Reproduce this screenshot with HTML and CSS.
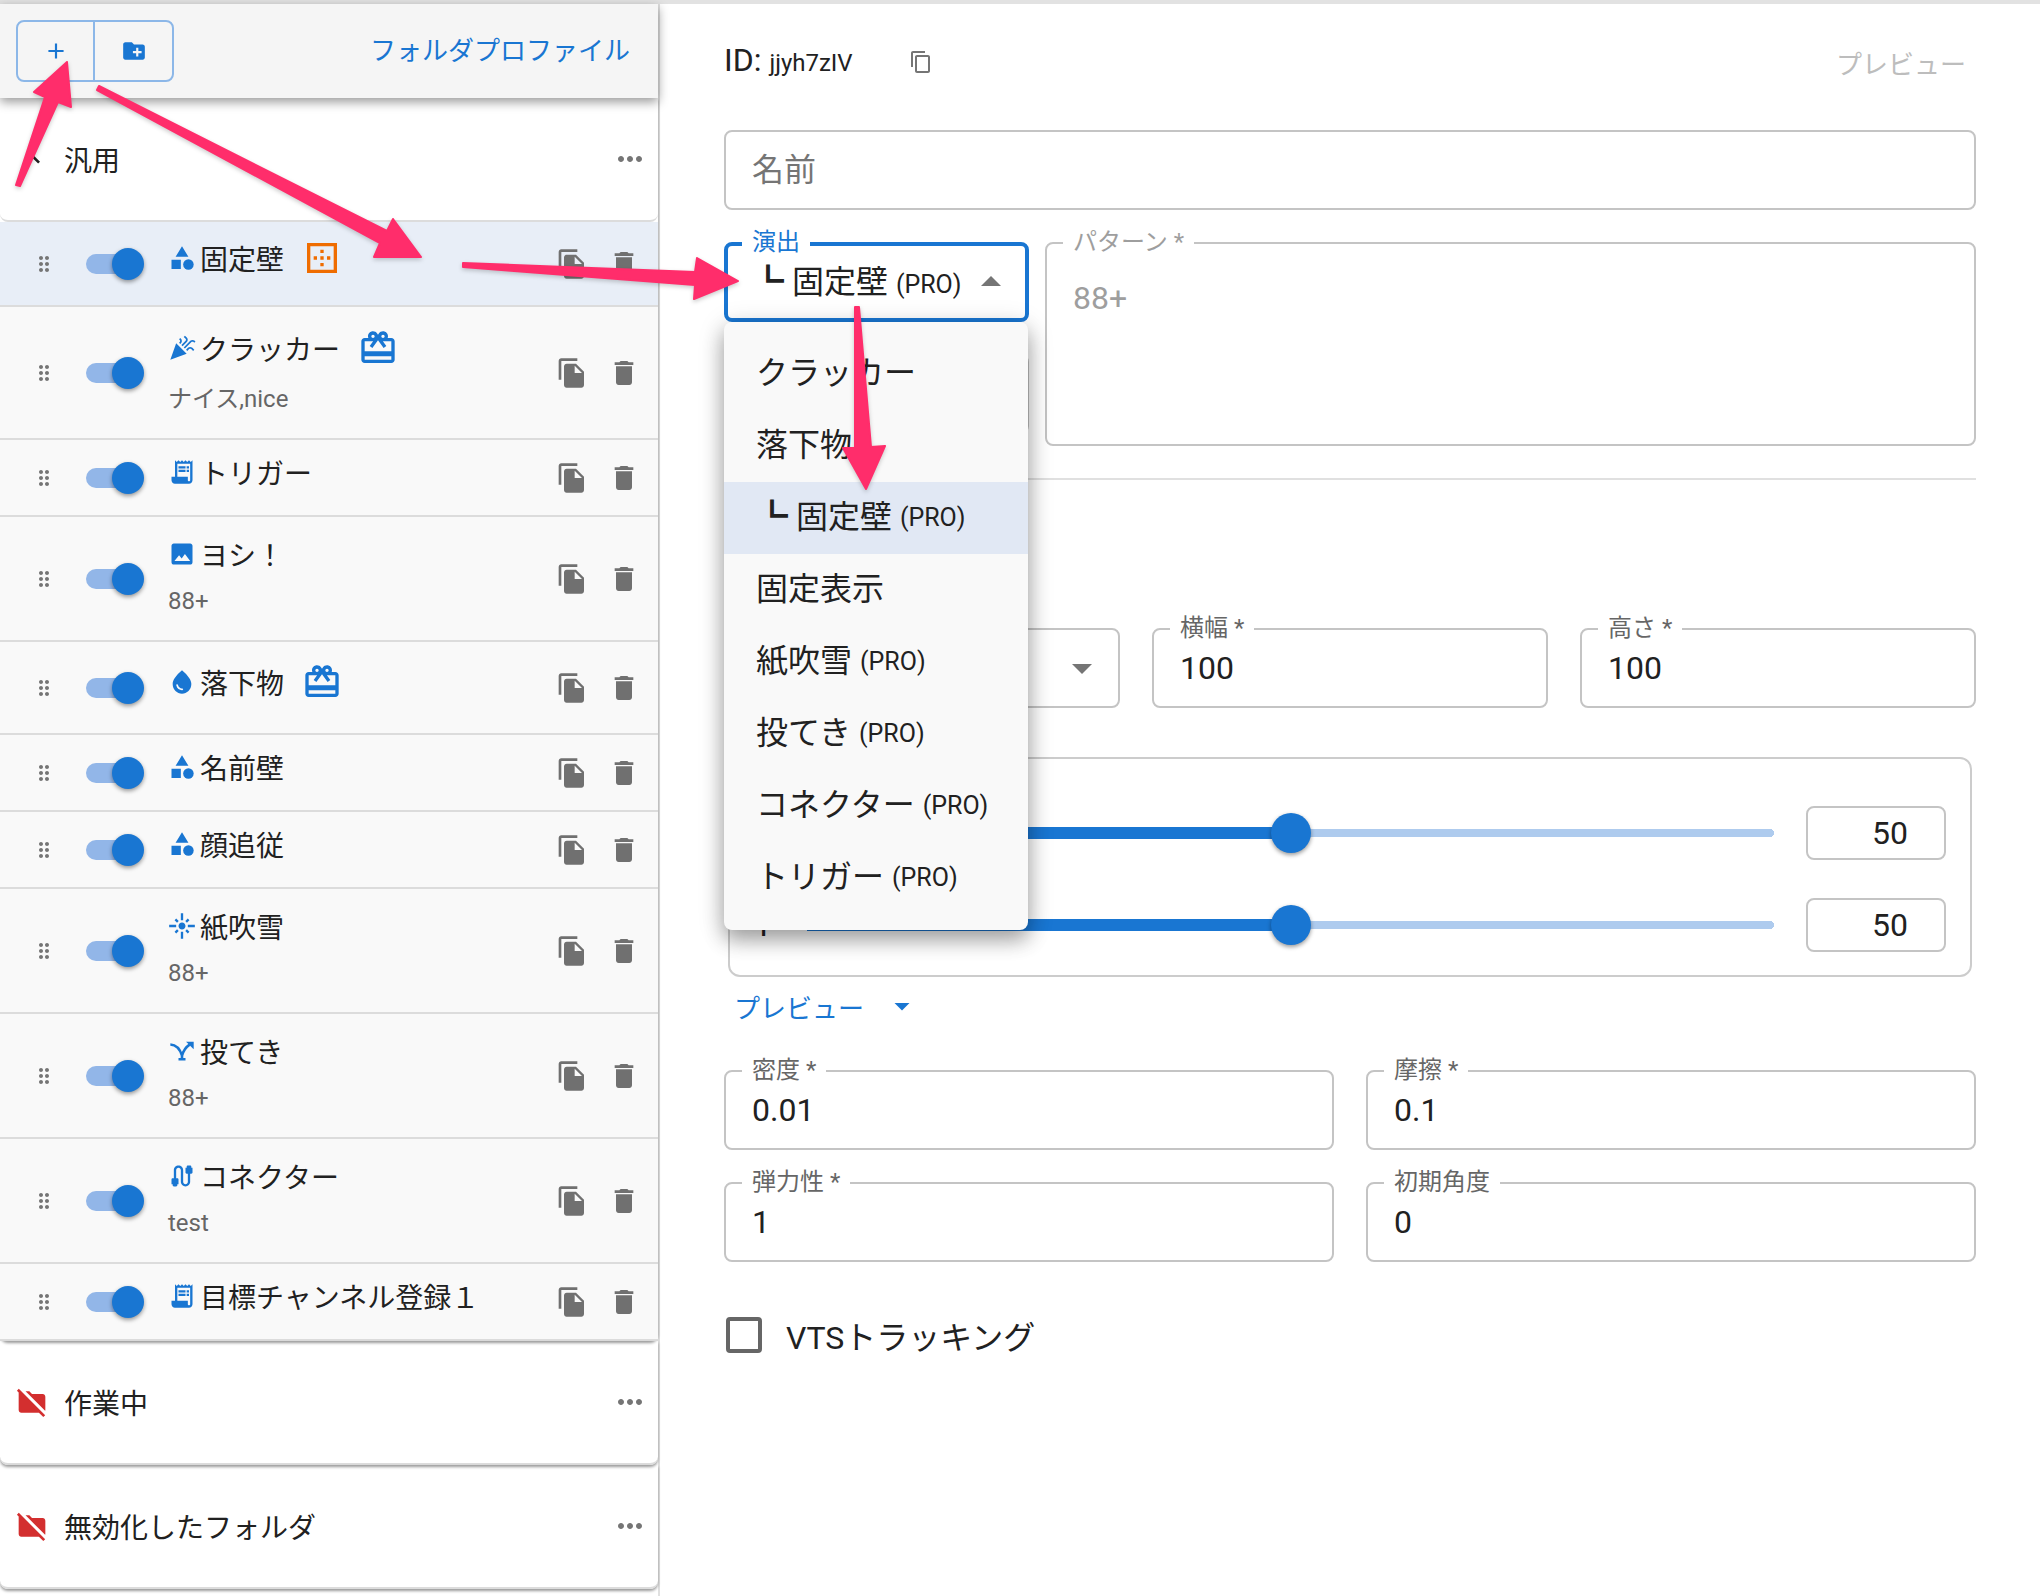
FILE: index.html
```html
<!DOCTYPE html>
<html lang="ja">
<head>
    <meta charset="UTF-8">
    <meta name="viewport" content="width=device-width, initial-scale=1.0">
    <title>フォルダプロファイル</title>
    <link rel="stylesheet" href="styles.css">
</head>
<body>
    <!-- Icon sprite -->
    <svg class="sprite" aria-hidden="true">
        <symbol id="i-add" viewBox="0 0 24 24"><path d="M19 13h-6v6h-2v-6H5v-2h6V5h2v6h6v2z"/></symbol>
        <symbol id="i-new-folder" viewBox="0 0 24 24"><path d="M20 6h-8l-2-2H4c-1.11 0-1.99.89-1.99 2L2 18c0 1.11.89 2 2 2h16c1.11 0 2-.89 2-2V8c0-1.11-.89-2-2-2zm-1 8h-3v3h-2v-3h-3v-2h3V9h2v3h3v2z"/></symbol>
        <symbol id="i-up" viewBox="0 0 24 24"><path d="m12 8-6 6 1.41 1.41L12 10.83l4.59 4.58L18 14z"/></symbol>
        <symbol id="i-more" viewBox="0 0 24 24"><path d="M6 10c-1.1 0-2 .9-2 2s.9 2 2 2 2-.9 2-2-.9-2-2-2zm12 0c-1.1 0-2 .9-2 2s.9 2 2 2 2-.9 2-2-.9-2-2-2zm-6 0c-1.1 0-2 .9-2 2s.9 2 2 2 2-.9 2-2-.9-2-2-2z"/></symbol>
        <symbol id="i-drag" viewBox="0 0 24 24"><path d="M11 18c0 1.1-.9 2-2 2s-2-.9-2-2 .9-2 2-2 2 .9 2 2zm-2-8c-1.1 0-2 .9-2 2s.9 2 2 2 2-.9 2-2-.9-2-2-2zm0-6c-1.1 0-2 .9-2 2s.9 2 2 2 2-.9 2-2-.9-2-2-2zm6 4c1.1 0 2-.9 2-2s-.9-2-2-2-2 .9-2 2 .9 2 2 2zm0 2c-1.1 0-2 .9-2 2s.9 2 2 2 2-.9 2-2-.9-2-2-2zm0 6c-1.1 0-2 .9-2 2s.9 2 2 2 2-.9 2-2-.9-2-2-2z"/></symbol>
        <symbol id="i-file-copy" viewBox="0 0 24 24"><path d="M16 1H4c-1.1 0-2 .9-2 2v14h2V3h12V1zm-1 4 6 6v10c0 1.1-.9 2-2 2H7.99C6.89 23 6 22.1 6 21l.01-14c0-1.1.89-2 1.99-2h7zm-1 7h5.5L14 6.5V12z"/></symbol>
        <symbol id="i-delete" viewBox="0 0 24 24"><path d="M6 19c0 1.1.9 2 2 2h8c1.1 0 2-.9 2-2V7H6v12zM19 4h-3.5l-1-1h-5l-1 1H5v2h14V4z"/></symbol>
        <symbol id="i-copy" viewBox="0 0 24 24"><path d="M16 1H4c-1.1 0-2 .9-2 2v14h2V3h12V1zm3 4H8c-1.1 0-2 .9-2 2v14c0 1.1.9 2 2 2h11c1.1 0 2-.9 2-2V7c0-1.1-.9-2-2-2zm0 16H8V7h11v14z"/></symbol>
        <symbol id="i-category" viewBox="0 0 24 24"><path d="m12 2-5.5 9h11zM3 13.5h8v8H3z"/><circle cx="17.5" cy="17.5" r="4.5"/></symbol>
        <symbol id="i-celebration" viewBox="0 0 24 24"><path d="m2 22 14-5-9-9zM14.53 12.53l5.59-5.59c.49-.49 1.28-.49 1.77 0l.59.59 1.06-1.06-.59-.59c-1.07-1.07-2.82-1.07-3.89 0l-5.59 5.59 1.06 1.06zM10.06 6.88l-.59.59 1.06 1.06.59-.59c1.07-1.07 1.07-2.82 0-3.89l-.59-.59-1.06 1.07.59.59c.48.48.48 1.28 0 1.76zM17.06 11.88l-1.59 1.59 1.06 1.06 1.59-1.59c.49-.49 1.28-.49 1.77 0l1.61 1.61 1.06-1.06-1.61-1.61c-1.08-1.07-2.82-1.07-3.89 0zM15.06 5.88l-3.59 3.59 1.06 1.06 3.59-3.59c1.07-1.07 1.07-2.82 0-3.89l-1.59-1.59-1.06 1.06 1.59 1.59c.48.49.48 1.29 0 1.77z"/></symbol>
        <symbol id="i-receipt" viewBox="0 0 24 24"><path d="M19.5 3.5 18 2l-1.5 1.5L15 2l-1.5 1.5L12 2l-1.5 1.5L9 2 7.5 3.5 6 2v14H3v3c0 1.66 1.34 3 3 3h12c1.66 0 3-1.34 3-3V2l-1.5 1.5zM19 19c0 .55-.45 1-1 1s-1-.45-1-1v-3H8V5h11v14zM9 7h6v2H9zM16 7h2v2h-2zM9 10h6v2H9zM16 10h2v2h-2z"/></symbol>
        <symbol id="i-image" viewBox="0 0 24 24"><path d="M21 19V5c0-1.1-.9-2-2-2H5c-1.1 0-2 .9-2 2v14c0 1.1.9 2 2 2h14c1.1 0 2-.9 2-2zM9.500 13l2.200 2.800L14.500 12l4.500 6H5.500l4-5z"/></symbol>
        <symbol id="i-drop" viewBox="0 0 24 24"><path d="M12 2c-5.33 4.55-8 8.48-8 11.8 0 4.98 3.8 8.2 8 8.2s8-3.22 8-8.2c0-3.32-2.67-7.25-8-11.8zM7.83 14c.37 0 .67.26.74.62.41 2.22 2.28 2.98 3.64 2.87.43-.02.79.32.79.75 0 .4-.32.73-.72.75-2.13.13-4.62-1.09-5.19-4.12-.08-.45.28-.87.74-.87z"/></symbol>
        <symbol id="i-flare" viewBox="0 0 24 24"><path d="M7 11H1v2h6v-2zm2.17-3.24L7.05 5.64 5.64 7.05l2.12 2.12 1.41-1.41zM13 1h-2v6h2V1zm5.36 6.05l-1.41-1.41-2.12 2.12 1.41 1.41 2.12-2.12zM17 11v2h6v-2h-6zm-5-2c-1.66 0-3 1.34-3 3s1.34 3 3 3 3-1.34 3-3-1.34-3-3-3zm2.83 7.24l2.12 2.12 1.41-1.41-2.12-2.12-1.41 1.41zm-9.19.71l1.41 1.41 2.12-2.12-1.41-1.41-2.12 2.12zM11 23h2v-6h-2v6z"/></symbol>
        <symbol id="i-throw" viewBox="0 0 24 24"><path d="M2 6.500c5 .3 8.300 4 10 9.500 1.200-4.500 3.500-7.500 6.500-9.500M12 15v4M9 19h6" fill="none" stroke="currentColor" stroke-width="2.200"/><path d="M15.500 4H22v6.500z"/></symbol>
        <symbol id="i-cable" viewBox="0 0 24 24"><path d="M20 5V4c0-.55-.45-1-1-1h-2c-.55 0-1 .45-1 1v1h-1v4c0 .55.45 1 1 1h1v7c0 1.100-.9 2-2 2s-2-.9-2-2V7c0-2.210-1.790-4-4-4S5 4.790 5 7v7H4c-.55 0-1 .45-1 1v4h1v1c0 .55.45 1 1 1h2c.55 0 1-.45 1-1v-1h1v-4c0-.55-.45-1-1-1H7V7c0-1.100.9-2 2-2s2 .9 2 2v10c0 2.210 1.790 4 4 4s4-1.790 4-4v-7h1c.55 0 1-.45 1-1V5h-1z"/></symbol>
        <symbol id="i-gift" viewBox="0 0 24 24"><path d="M20 6h-2.180c.11-.31.18-.65.18-1 0-1.660-1.340-3-3-3-1.050 0-1.960.54-2.500 1.350l-.5.67-.5-.68C10.960 2.540 10.050 2 9 2 7.340 2 6 3.340 6 5c0 .35.070.69.180 1H4c-1.110 0-1.990.89-1.990 2L2 19c0 1.110.89 2 2 2h16c1.110 0 2-.89 2-2V8c0-1.110-.89-2-2-2zm-5-2c.55 0 1 .45 1 1s-.45 1-1 1-1-.45-1-1 .45-1 1-1zM9 4c.55 0 1 .45 1 1s-.45 1-1 1-1-.45-1-1 .45-1 1-1zm11 15H4v-2h16v2zm0-5H4V8h5.080L7 10.830 8.620 12 12 7.400l3.380 4.600L17 10.830 14.920 8H20v6z"/></symbol>
        <symbol id="i-border" viewBox="0 0 24 24"><path d="M13 7h-2v2h2V7zm0 4h-2v2h2v-2zm4 0h-2v2h2v-2zM3 3v18h18V3H3zm16 16H5V5h14v14zm-6-4h-2v2h2v-2zm-4-4H7v2h2v-2z"/></symbol>
        <symbol id="i-folder-off" viewBox="0 0 24 24"><path d="M20 6h-8l-2-2H7.170l14.650 14.650c.11-.19.180-.42.180-.65V8c0-1.100-.9-2-2-2zM2.100 2.100.69 3.510 2 4.820V18c0 1.100.9 2 2 2h13.170l3.310 3.310 1.410-1.410z"/></symbol>
        <symbol id="i-caret-down" viewBox="0 0 24 24"><path d="m7 10 5 5 5-5z"/></symbol>
        <symbol id="i-caret-up" viewBox="0 0 24 24"><path d="m7 14 5-5 5 5z"/></symbol>
    </svg>

    <div class="app">
        <!-- Folder list -->
        <aside class="sidebar">
            <header class="toolbar">
                <div class="button-group">
                    <button type="button" aria-label="追加"><svg><use href="#i-add"/></svg></button>
                    <button type="button" aria-label="フォルダ追加"><svg><use href="#i-new-folder"/></svg></button>
                </div>
                <button type="button" class="text-button">フォルダプロファイル</button>
            </header>

            <section class="folder">
                <div class="folder-head">
                    <svg class="folder-icon"><use href="#i-up"/></svg>
                    <span class="folder-name">汎用</span>
                    <button type="button" class="more" aria-label="メニュー"><svg><use href="#i-more"/></svg></button>
                </div>
                <ul class="items">
                    <li class="item selected">
                        <svg class="drag"><use href="#i-drag"/></svg>
                        <input type="checkbox" class="switch" aria-label="固定壁" checked>
                        <div class="item-text">
                            <div class="item-title has-badge"><svg class="kind"><use href="#i-category"/></svg>固定壁<svg class="badge orange"><use href="#i-border"/></svg></div>
                        </div>
                        <button type="button" class="action" aria-label="複製"><svg><use href="#i-file-copy"/></svg></button>
                        <button type="button" class="action" aria-label="削除"><svg><use href="#i-delete"/></svg></button>
                    </li>
                    <li class="item">
                        <svg class="drag"><use href="#i-drag"/></svg>
                        <input type="checkbox" class="switch" aria-label="クラッカー" checked>
                        <div class="item-text two-line">
                            <div class="item-title has-badge"><svg class="kind"><use href="#i-celebration"/></svg>クラッカー<svg class="badge"><use href="#i-gift"/></svg></div>
                            <div class="item-sub">ナイス,nice</div>
                        </div>
                        <button type="button" class="action" aria-label="複製"><svg><use href="#i-file-copy"/></svg></button>
                        <button type="button" class="action" aria-label="削除"><svg><use href="#i-delete"/></svg></button>
                    </li>
                    <li class="item">
                        <svg class="drag"><use href="#i-drag"/></svg>
                        <input type="checkbox" class="switch" aria-label="トリガー" checked>
                        <div class="item-text">
                            <div class="item-title"><svg class="kind"><use href="#i-receipt"/></svg>トリガー</div>
                        </div>
                        <button type="button" class="action" aria-label="複製"><svg><use href="#i-file-copy"/></svg></button>
                        <button type="button" class="action" aria-label="削除"><svg><use href="#i-delete"/></svg></button>
                    </li>
                    <li class="item">
                        <svg class="drag"><use href="#i-drag"/></svg>
                        <input type="checkbox" class="switch" aria-label="ヨシ！" checked>
                        <div class="item-text two-line">
                            <div class="item-title"><svg class="kind"><use href="#i-image"/></svg>ヨシ！</div>
                            <div class="item-sub">88+</div>
                        </div>
                        <button type="button" class="action" aria-label="複製"><svg><use href="#i-file-copy"/></svg></button>
                        <button type="button" class="action" aria-label="削除"><svg><use href="#i-delete"/></svg></button>
                    </li>
                    <li class="item">
                        <svg class="drag"><use href="#i-drag"/></svg>
                        <input type="checkbox" class="switch" aria-label="落下物" checked>
                        <div class="item-text">
                            <div class="item-title has-badge tall"><svg class="kind"><use href="#i-drop"/></svg>落下物<svg class="badge"><use href="#i-gift"/></svg></div>
                        </div>
                        <button type="button" class="action" aria-label="複製"><svg><use href="#i-file-copy"/></svg></button>
                        <button type="button" class="action" aria-label="削除"><svg><use href="#i-delete"/></svg></button>
                    </li>
                    <li class="item">
                        <svg class="drag"><use href="#i-drag"/></svg>
                        <input type="checkbox" class="switch" aria-label="名前壁" checked>
                        <div class="item-text">
                            <div class="item-title"><svg class="kind"><use href="#i-category"/></svg>名前壁</div>
                        </div>
                        <button type="button" class="action" aria-label="複製"><svg><use href="#i-file-copy"/></svg></button>
                        <button type="button" class="action" aria-label="削除"><svg><use href="#i-delete"/></svg></button>
                    </li>
                    <li class="item">
                        <svg class="drag"><use href="#i-drag"/></svg>
                        <input type="checkbox" class="switch" aria-label="顔追従" checked>
                        <div class="item-text">
                            <div class="item-title"><svg class="kind"><use href="#i-category"/></svg>顔追従</div>
                        </div>
                        <button type="button" class="action" aria-label="複製"><svg><use href="#i-file-copy"/></svg></button>
                        <button type="button" class="action" aria-label="削除"><svg><use href="#i-delete"/></svg></button>
                    </li>
                    <li class="item">
                        <svg class="drag"><use href="#i-drag"/></svg>
                        <input type="checkbox" class="switch" aria-label="紙吹雪" checked>
                        <div class="item-text two-line">
                            <div class="item-title"><svg class="kind"><use href="#i-flare"/></svg>紙吹雪</div>
                            <div class="item-sub">88+</div>
                        </div>
                        <button type="button" class="action" aria-label="複製"><svg><use href="#i-file-copy"/></svg></button>
                        <button type="button" class="action" aria-label="削除"><svg><use href="#i-delete"/></svg></button>
                    </li>
                    <li class="item">
                        <svg class="drag"><use href="#i-drag"/></svg>
                        <input type="checkbox" class="switch" aria-label="投てき" checked>
                        <div class="item-text two-line">
                            <div class="item-title"><svg class="kind"><use href="#i-throw"/></svg>投てき</div>
                            <div class="item-sub">88+</div>
                        </div>
                        <button type="button" class="action" aria-label="複製"><svg><use href="#i-file-copy"/></svg></button>
                        <button type="button" class="action" aria-label="削除"><svg><use href="#i-delete"/></svg></button>
                    </li>
                    <li class="item">
                        <svg class="drag"><use href="#i-drag"/></svg>
                        <input type="checkbox" class="switch" aria-label="コネクター" checked>
                        <div class="item-text two-line">
                            <div class="item-title"><svg class="kind"><use href="#i-cable"/></svg>コネクター</div>
                            <div class="item-sub">test</div>
                        </div>
                        <button type="button" class="action" aria-label="複製"><svg><use href="#i-file-copy"/></svg></button>
                        <button type="button" class="action" aria-label="削除"><svg><use href="#i-delete"/></svg></button>
                    </li>
                    <li class="item">
                        <svg class="drag"><use href="#i-drag"/></svg>
                        <input type="checkbox" class="switch" aria-label="目標チャンネル登録１" checked>
                        <div class="item-text">
                            <div class="item-title"><svg class="kind"><use href="#i-receipt"/></svg>目標チャンネル登録１</div>
                        </div>
                        <button type="button" class="action" aria-label="複製"><svg><use href="#i-file-copy"/></svg></button>
                        <button type="button" class="action" aria-label="削除"><svg><use href="#i-delete"/></svg></button>
                    </li>
                </ul>
            </section>

            <section class="folder">
                <div class="folder-head">
                    <svg class="folder-icon off"><use href="#i-folder-off"/></svg>
                    <span class="folder-name">作業中</span>
                    <button type="button" class="more" aria-label="メニュー"><svg><use href="#i-more"/></svg></button>
                </div>
            </section>

            <section class="folder">
                <div class="folder-head">
                    <svg class="folder-icon off"><use href="#i-folder-off"/></svg>
                    <span class="folder-name">無効化したフォルダ</span>
                    <button type="button" class="more" aria-label="メニュー"><svg><use href="#i-more"/></svg></button>
                </div>
            </section>
        </aside>

        <!-- Editor -->
        <main class="editor">
            <header class="editor-head">
                <div class="item-id">ID: <small>jjyh7zIV</small></div>
                <button type="button" class="copy-id" aria-label="コピー"><svg><use href="#i-copy"/></svg></button>
                <button type="button" class="text-button" disabled>プレビュー</button>
            </header>

            <div class="field">
                <input type="text" placeholder="名前" aria-label="名前">
            </div>

            <div class="effect-row">
                <div class="effect-col">
                    <div class="field focused">
                        <label for="effect">演出</label>
                        <select id="effect"><option value="wall" selected></option></select>
                        <span class="select-value">┗ 固定壁 <small>(PRO)</small></span>
                        <svg class="caret"><use href="#i-caret-up"/></svg>
                        <ul class="menu" role="listbox" aria-label="演出">
                            <li role="option">クラッカー</li>
                            <li role="option">落下物</li>
                            <li role="option" aria-selected="true">┗ 固定壁 <small>(PRO)</small></li>
                            <li role="option">固定表示</li>
                            <li role="option">紙吹雪 <small>(PRO)</small></li>
                            <li role="option">投てき <small>(PRO)</small></li>
                            <li role="option">コネクター <small>(PRO)</small></li>
                            <li role="option">トリガー <small>(PRO)</small></li>
                        </ul>
                    </div>
                    <div class="field">
                        <input type="text" aria-label="条件">
                    </div>
                </div>
                <div class="field disabled">
                    <label for="pattern">パターン *</label>
                    <textarea id="pattern" disabled>88+</textarea>
                </div>
            </div>

            <hr>

            <div class="size-row">
                <div class="field">
                    <select aria-label="形状"><option></option></select>
                    <svg class="caret"><use href="#i-caret-down"/></svg>
                </div>
                <div class="field">
                    <label for="width">横幅 *</label>
                    <input type="text" id="width" value="100">
                </div>
                <div class="field">
                    <label for="height">高さ *</label>
                    <input type="text" id="height" value="100">
                </div>
            </div>

            <div class="position">
                <div class="slider-row">
                    <label for="pos-x"></label>
                    <input type="range" id="pos-x" aria-label="X" min="0" max="100" value="50">
                    <input type="text" class="slider-value" aria-label="X" value="50">
                </div>
                <div class="slider-row">
                    <label for="pos-y">Y</label>
                    <input type="range" id="pos-y" min="0" max="100" value="50">
                    <input type="text" class="slider-value" aria-label="Y" value="50">
                </div>
            </div>

            <button type="button" class="text-button preview-toggle">プレビュー<svg><use href="#i-caret-down"/></svg></button>

            <div class="physics">
                <div class="field">
                    <label for="density">密度 *</label>
                    <input type="text" id="density" value="0.01">
                </div>
                <div class="field">
                    <label for="friction">摩擦 *</label>
                    <input type="text" id="friction" value="0.1">
                </div>
                <div class="field">
                    <label for="bounce">弾力性 *</label>
                    <input type="text" id="bounce" value="1">
                </div>
                <div class="field">
                    <label for="angle">初期角度</label>
                    <input type="text" id="angle" value="0">
                </div>
            </div>

            <label class="check"><input type="checkbox">VTSトラッキング</label>
        </main>
    </div>

    <!-- Guide arrows over the page -->
    <svg class="arrows" viewBox="0 0 900 500" aria-hidden="true">
        <path d="M16 185 45 97 34 92 67 62 71 107 58 102 20 186z"/>
        <path d="M99 86 387 231 393 219 421 257 374 257 380 243 97 90z"/>
        <path d="M463 263 695 272 697 258 738 281 694 299 695 285 463 267z"/>
        <path d="M855 307 855 448 843 448 866 489 885 446 871 447 859 307z"/>
    </svg>
</body>
</html>
```
FILE: styles.css
```css
* {
    box-sizing: border-box;
}
body {
    margin: 0;
    position: relative;
    background-color: #fff;
    color: #212121;
    font-family: Roboto, "Noto Sans CJK JP", sans-serif;
    font-size: 32px;
}
button, input, select, textarea {
    font: inherit;
    color: inherit;
    margin: 0;
}
button {
    padding: 0;
    border: none;
    background: none;
}
svg {
    fill: currentColor;
    flex: none;
}
.sprite {
    position: absolute;
    width: 0;
    height: 0;
}
.app {
    display: grid;
    grid-template-columns: 660px 1fr;
    min-height: 100vh;
    border-top: 4px solid #e2e2e2;
}

/* Sidebar */
.sidebar {
    border-right: 2px solid #e0e0e0;
    font-size: 28px;
}
.toolbar {
    position: relative;
    display: flex;
    align-items: center;
    justify-content: space-between;
    height: 94px;
    padding: 0 28px 0 16px;
    background-color: #f5f5f5;
    box-shadow: 0 4px 10px rgba(0, 0, 0, 0.4);
}
.toolbar .text-button {
    padding-bottom: 6px;
}
.button-group {
    display: flex;
    border: 2px solid #8cb7e8;
    border-radius: 8px;
    color: #1976d2;
}
.button-group button {
    display: flex;
    align-items: center;
    justify-content: center;
    width: 77px;
    height: 58px;
}
.button-group button:first-child {
    border-right: 2px solid #8cb7e8;
}
.button-group svg {
    width: 26px;
    height: 26px;
}
.text-button {
    color: #1976d2;
    font-size: 26px;
}
.text-button:disabled {
    color: #bdbdbd;
}
.folder {
    border-radius: 0 0 8px 8px;
    box-shadow: 0 2px 3px rgba(0, 0, 0, 0.4);
}
.folder-head {
    display: flex;
    align-items: center;
    height: 124px;
    padding: 0 10px 0 16px;
    border-bottom: 2px solid #dcdcdc;
    border-radius: 0 0 8px 8px;
}
.folder-icon {
    width: 32px;
    height: 32px;
    margin-right: 16px;
}
.folder-icon.off {
    color: #d32f2f;
}
.folder-name {
    flex: 1;
}
.more {
    display: flex;
    color: #757575;
}
.more svg {
    width: 36px;
    height: 36px;
}
.items {
    list-style: none;
    margin: 0;
    padding: 0;
}
.item {
    display: flex;
    align-items: center;
    padding: 0 8px 0 32px;
    background-color: #f9f9f9;
    border-bottom: 2px solid #dcdcdc;
}
.item.selected {
    background-color: #e8eef7;
}
.drag {
    width: 24px;
    height: 24px;
    color: #757575;
}
.switch {
    appearance: none;
    position: relative;
    width: 52px;
    height: 20px;
    margin: 0 30px;
    border-radius: 10px;
    background-color: #92b6e8;
}
.switch::before {
    content: "";
    position: absolute;
    top: -6px;
    left: 26px;
    width: 32px;
    height: 32px;
    border-radius: 50%;
    background-color: #1976d2;
    box-shadow: 0 2px 4px rgba(0, 0, 0, 0.4);
}
.item-text {
    flex: 1;
    padding: 10px 0 21px;
}
.item-text.two-line {
    padding: 15px 0 16px;
}
.item-title {
    display: flex;
    align-items: center;
    height: 44px;
}
.item-title.has-badge {
    height: 52px;
}
.item-title.tall {
    height: 60px;
}
.item-sub {
    height: 48px;
    line-height: 50px;
    font-size: 24px;
    color: #666;
}
.kind {
    width: 28px;
    height: 28px;
    margin-right: 4px;
    color: #1976d2;
}
.badge {
    width: 40px;
    height: 40px;
    margin-left: 18px;
    color: #1976d2;
}
.badge.orange {
    color: #ef6c00;
}
.action {
    display: flex;
    padding: 10px;
    color: #707070;
}
.action svg {
    width: 32px;
    height: 32px;
}

/* Editor */
.editor {
    padding: 0 64px;
}
.editor-head {
    display: flex;
    align-items: center;
    height: 116px;
    margin-bottom: 10px;
}
.item-id {
    padding-bottom: 4px;
}
.item-id small {
    font-size: 24px;
}
.copy-id {
    display: flex;
    margin-left: 56px;
    color: #757575;
}
.copy-id svg {
    width: 24px;
    height: 24px;
}
.editor-head .text-button {
    margin-left: auto;
    padding-right: 10px;
}
.field {
    position: relative;
}
.field input, .field select, .field textarea {
    display: block;
    width: 100%;
    height: 80px;
    padding: 0 26px;
    border: 2px solid #c4c4c4;
    border-radius: 8px;
    background-color: #fff;
    appearance: none;
    outline: none;
    resize: none;
}
.field input::placeholder {
    color: #757575;
    opacity: 1;
}
.field textarea {
    height: 204px;
    padding: 34px 26px;
    line-height: 40px;
}
.field label {
    position: absolute;
    top: -16px;
    left: 18px;
    padding: 0 10px;
    background-color: #fff;
    color: #666;
    font-size: 24px;
    line-height: 32px;
}
.field.focused select {
    border: 4px solid #1976d2;
}
.field.focused label {
    color: #1976d2;
}
.field.disabled label, .field.disabled textarea {
    color: #9e9e9e;
}
.caret {
    position: absolute;
    top: 16px;
    right: 14px;
    width: 48px;
    height: 48px;
    color: #757575;
    pointer-events: none;
}
.select-value {
    position: absolute;
    top: 0;
    left: 28px;
    line-height: 80px;
    white-space: nowrap;
    pointer-events: none;
}
.select-value small, .menu small {
    font-size: 25px;
}
.menu small {
    vertical-align: 2px;
}
.menu {
    position: absolute;
    z-index: 2;
    top: 80px;
    left: 0;
    right: 1px;
    margin: 0;
    padding: 16px 0;
    list-style: none;
    border-radius: 8px;
    background-color: #f9f9f9;
    box-shadow: 0 10px 20px rgba(0, 0, 0, 0.3), 0 4px 28px rgba(0, 0, 0, 0.16);
}
.menu li {
    height: 72px;
    padding: 0 32px;
    line-height: 70px;
    white-space: nowrap;
}
.menu li[aria-selected="true"] {
    background-color: #e1e8f4;
}
.effect-row {
    display: grid;
    grid-template-columns: 305px 1fr;
    gap: 16px;
    margin-top: 32px;
}
.effect-col {
    display: grid;
    align-content: start;
    gap: 32px;
}
hr {
    margin: 32px 0 148px;
    border: none;
    border-top: 2px solid #e0e0e0;
}
.size-row {
    display: grid;
    grid-template-columns: repeat(3, 1fr);
    gap: 32px;
}
.position {
    display: grid;
    gap: 38px;
    margin: 49px 4px 0;
    padding: 47px 24px 23px;
    border: 2px solid #ccc;
    border-radius: 12px;
}
.slider-row {
    display: flex;
    align-items: center;
}
.slider-row label {
    width: 53px;
}
.slider-row input[type="range"] {
    flex: 1;
    min-width: 0;
    height: 40px;
    margin-right: 32px;
    appearance: none;
    background:
        linear-gradient(#1976d2, #1976d2) left center / 50% 12px no-repeat,
        linear-gradient(#aecbee, #aecbee) left center / calc(100% - 4px) 8px no-repeat,
        radial-gradient(circle, #aecbee 4px, transparent 4px) right center / 8px 8px no-repeat;
}
.slider-row input[type="range"]::-webkit-slider-thumb {
    appearance: none;
    width: 40px;
    height: 40px;
    border-radius: 50%;
    background-color: #1976d2;
    box-shadow: 0 2px 4px rgba(0, 0, 0, 0.4);
}
.slider-value {
    width: 140px;
    height: 54px;
    padding: 0 36px 0 10px;
    border: 2px solid #c4c4c4;
    border-radius: 8px;
    text-align: right;
}
.preview-toggle {
    display: flex;
    align-items: center;
    height: 60px;
    padding: 0 0 2px 10px;
}
.preview-toggle svg {
    width: 36px;
    height: 36px;
    margin-left: 20px;
}
.physics {
    display: grid;
    grid-template-columns: repeat(2, 1fr);
    gap: 32px;
    margin-top: 33px;
}
.check {
    display: flex;
    align-items: center;
    width: fit-content;
    margin: 50px 0 0 2px;
}
.check input {
    appearance: none;
    width: 36px;
    height: 36px;
    margin-right: 24px;
    border: 4px solid #666;
    border-radius: 4px;
}
.arrows {
    position: absolute;
    z-index: 3;
    top: 0;
    left: 0;
    width: 900px;
    height: 500px;
    color: #ff2d6b;
    stroke: currentColor;
    stroke-width: 2;
    stroke-linejoin: round;
    pointer-events: none;
    filter: drop-shadow(0 2px 2px rgba(0, 0, 0, 0.2));
}
```
